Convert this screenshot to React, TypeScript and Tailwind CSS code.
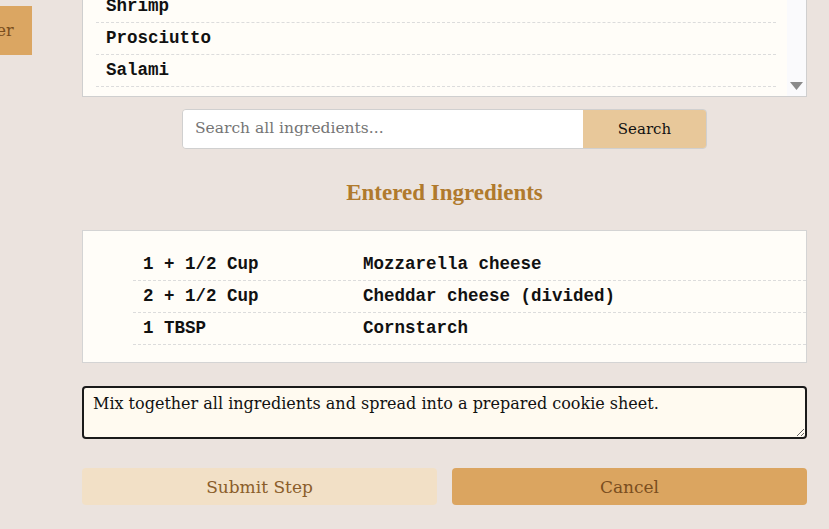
import { useState } from 'react';

const listItems = ['Shrimp', 'Prosciutto', 'Salami'];

const entered = [
  { qty: '1 + 1/2 Cup', name: 'Mozzarella cheese' },
  { qty: '2 + 1/2 Cup', name: 'Cheddar cheese (divided)' },
  { qty: '1 TBSP', name: 'Cornstarch' },
];

const slab = "font-['DejaVu_Serif',serif]";
const mono = "font-['Liberation_Mono','Courier_New',monospace]";

export default function App() {
  const [step, setStep] = useState('Mix together all ingredients and spread into a prepared cookie sheet.');

  return (
    <div className="h-[529px] w-[829px] overflow-hidden bg-[#ebe3de]">
      <div className="flex items-start">
        {/* side button, cut off by the left edge */}
        <button
          className={`mt-[6px] ml-[-48px] h-[49px] w-[80px] shrink-0 bg-[#dba662] pl-[16px] text-left text-[16px] text-[#7a4e1e] ${slab}`}
        >
          Enter
        </button>

        <div className="ml-[50px] w-[725px]">
          {/* ingredient picker list */}
          <div className="mt-[-19px] flex border border-[#cfcfcf] bg-[#fffdf8]">
            <div className="flex-1 py-[9px] pl-[13px] pr-[11px]">
              {listItems.map(item => (
                <div
                  key={item}
                  className={`flex h-[32px] items-center border-b border-dashed border-[#dcdcdc] px-[10px] text-[17.5px] font-bold text-[#111] ${mono}`}
                >
                  {item}
                </div>
              ))}
            </div>
            <div className="flex w-[19px] flex-col justify-end bg-[#fafafc] pb-[5px]">
              <svg width="13" height="9" viewBox="0 0 13 9" className="mx-auto">
                <path d="M0 0 H13 L6.5 8 Z" fill="#8a8a8a" />
              </svg>
            </div>
          </div>

          {/* search */}
          <div className="mt-[12px] flex justify-center">
            <div className="flex h-[40px] w-[525px] overflow-hidden rounded-[4px] border border-[#d0d0d0]">
              <input
                placeholder="Search all ingredients..."
                className={`w-[400px] bg-white px-[12px] text-[15.5px] text-[#111] placeholder:text-[#757575] focus:outline-none ${slab}`}
              />
              <button className={`flex-1 bg-[#e8c89a] text-[15px] text-[#111] ${slab}`}>Search</button>
            </div>
          </div>

          <h2 className="mt-[27px] text-center font-['Liberation_Serif',serif] text-[23px] font-bold text-[#b07a2d]">
            Entered Ingredients
          </h2>

          {/* entered ingredients */}
          <div className="mt-[19px] border border-[#d4d4d4] bg-[#fffdf8] pt-[18px] pb-[17px] pl-[50px]">
            {entered.map(row => (
              <div
                key={row.name}
                className={`flex h-[32px] items-center border-b border-dashed border-[#dcdcdc] pl-[10px] text-[17.5px] font-bold text-[#111] ${mono}`}
              >
                <span className="w-[220px]">{row.qty}</span>
                <span>{row.name}</span>
              </div>
            ))}
          </div>

          <textarea
            value={step}
            onChange={e => setStep(e.target.value)}
            className={`mt-[23px] block h-[53px] w-full rounded-[4px] border-2 border-[#1a1a1a] bg-[#fffaf0] px-[9px] pt-[6px] pb-[2px] text-[16px] leading-[20px] text-[#111] focus:outline-none ${slab}`}
          />

          <div className="mt-[29px] grid grid-cols-2 gap-[15px]">
            <button className={`h-[37px] rounded-[4px] bg-[#f2e0c6] pt-[3px] text-[17px] text-[#8b5e2b] ${slab}`}>
              Submit Step
            </button>
            <button className={`h-[37px] rounded-[4px] bg-[#dba560] pt-[3px] text-[17px] text-[#7a4e1e] ${slab}`}>
              Cancel
            </button>
          </div>
        </div>
      </div>
    </div>
  );
}
